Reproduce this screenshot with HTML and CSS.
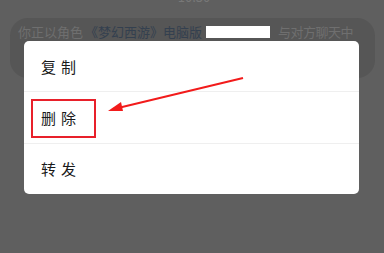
FILE: index.html
```html
<!DOCTYPE html>
<html lang="zh">
<head>
<meta charset="utf-8">
<link rel="stylesheet" href="styles.css">
</head>
<body>
<div class="screen">
  <div class="time">10:30</div>
  <div class="bubble">
    <span>你正以角色</span><span class="game">《梦幻西游》电脑版</span><span class="mask"></span><span class="tail">与对方聊天中</span>
  </div>
  <div class="menu">
    <div class="item">复制</div>
    <div class="item">删除</div>
    <div class="item">转发</div>
  </div>
  <div class="highlight"></div>
  <svg class="arrow" width="384" height="253" viewBox="0 0 384 253">
    <line x1="243" y1="78" x2="118" y2="108" stroke="#f21b1b" stroke-width="2"/>
    <polygon points="108,111 121,102 123,111" fill="#f21b1b"/>
  </svg>
</div>
</body>
</html>
```
FILE: styles.css
```css
html, body {
  margin: 0;
  padding: 0;
  background: #5f5f5f;
}
.screen {
  position: relative;
  width: 384px;
  height: 253px;
  overflow: hidden;
  font-family: "Noto Sans CJK SC", "Noto Sans", sans-serif;
}
.time {
  height: 18px;
  margin-top: -12px;
  text-align: center;
  font-size: 13px;
  line-height: 18px;
  color: #787878;
  padding-left: 4px;
}
.bubble {
  margin: 12px 9px 0 10px;
  height: 60px;
  border-radius: 18px;
  background: #565656;
  padding: 7px 0 0 8px;
  box-sizing: border-box;
  font-size: 13px;
  line-height: 14px;
  color: #6f6f6f;
  white-space: nowrap;
  display: flex;
  align-items: flex-start;
}
.game {
  color: #34404f;
  margin-left: 2px;
}
.mask {
  display: inline-block;
  width: 64px;
  height: 12px;
  margin: 1px 8px 0 4px;
  background: #ffffff;
}
.tail {
  letter-spacing: -0.5px;
}
.menu {
  position: absolute;
  left: 24px;
  top: 41px;
  width: 335px;
  height: 153px;
  background: #ffffff;
  border-radius: 5px;
  display: flex;
  flex-direction: column;
}
.item {
  flex: 1;
  display: flex;
  align-items: center;
  padding-left: 17px;
  font-size: 15px;
  letter-spacing: 5px;
  color: #1a1a1a;
  border-bottom: 1px solid #efefef;
}
.item:last-child {
  border-bottom: none;
}
.highlight {
  position: absolute;
  left: 31px;
  top: 99px;
  width: 61px;
  height: 35px;
  border: 2px solid #e8202a;
}
.arrow {
  position: absolute;
  left: 0;
  top: 0;
}
```
